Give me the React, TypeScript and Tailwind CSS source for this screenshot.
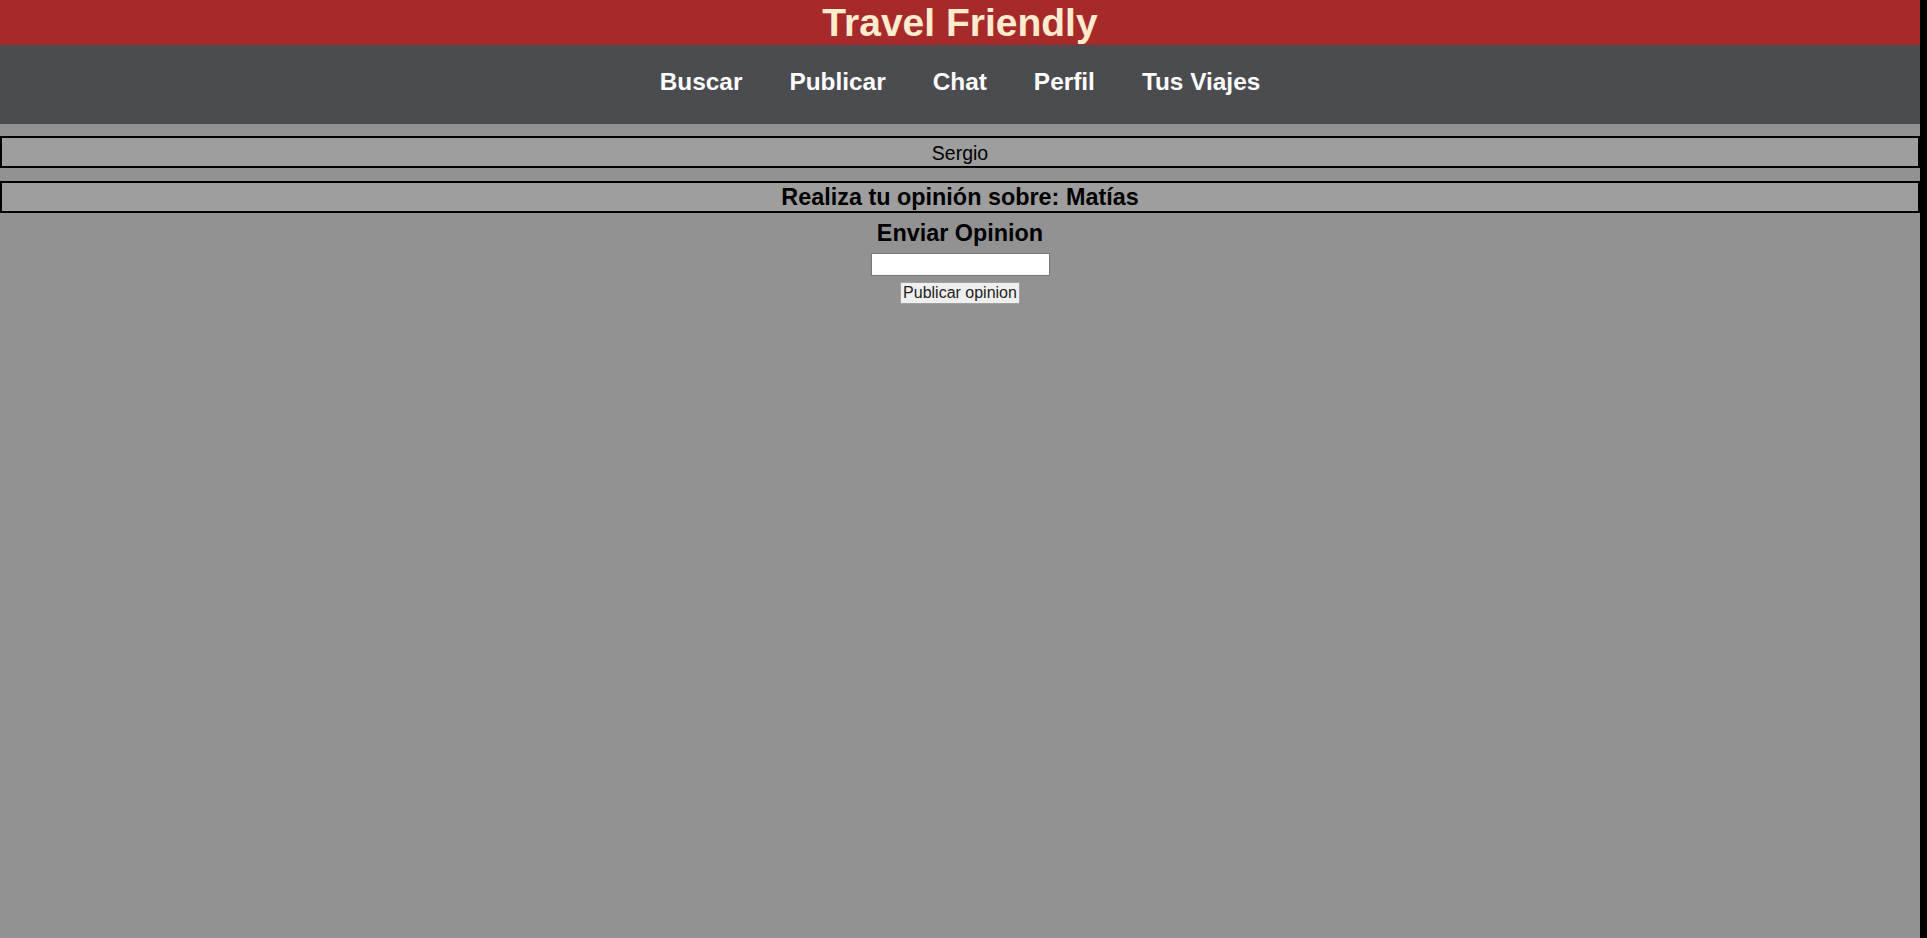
import { useState } from 'react'

const links = ['Buscar', 'Publicar', 'Chat', 'Perfil', 'Tus Viajes']

export default function App() {
  const [opinion, setOpinion] = useState('')

  return (
    <div className="flex min-h-screen bg-black font-['Liberation_Sans',Arial,sans-serif]">
      <div className="w-[1920px] shrink-0 bg-[#929292] text-black">
        {/* cabecera */}
        <header className="h-[45px] overflow-hidden bg-[#a72a2b] text-center">
          <h1 className="text-[39px] font-bold leading-[45px] text-[#ffebcd]">Travel Friendly</h1>
        </header>

        {/* menu */}
        <nav className="flex h-[79px] justify-center gap-[47px] bg-[#4b4c50] pt-[23px]">
          {links.map((link) => (
            <a key={link} href="#" className="text-[24.4px] font-bold leading-[28px] text-white">
              {link}
            </a>
          ))}
        </nav>

        <div className="mt-[12px] flex h-[32px] items-center justify-center border-2 border-black bg-[#9e9e9e] pt-[2px]">
          <span className="text-[19.5px] leading-[22px]">Sergio</span>
        </div>

        <div className="mt-[13px] flex h-[32px] items-center justify-center border-2 border-black bg-[#9e9e9e]">
          <h3 className="text-[23.4px] font-bold leading-[26px]">Realiza tu opinión sobre: Matías</h3>
        </div>

        {/* formulario */}
        <form className="flex flex-col items-center" onSubmit={(e) => e.preventDefault()}>
          <h3 className="mt-[7px] text-[23.4px] font-bold leading-[27px]">Enviar Opinion</h3>
          <input
            type="text"
            value={opinion}
            onChange={(e) => setOpinion(e.target.value)}
            className="mt-[6px] h-[23px] w-[179px] border border-[#767676] bg-white px-1 text-[14px]"
          />
          <button
            type="submit"
            className="mt-[6px] h-[22px] w-[120px] border border-[#a0a0a0] bg-[#efefef] text-[16px] leading-[20px] text-[#222]"
          >
            Publicar opinion
          </button>
        </form>
      </div>
    </div>
  )
}
